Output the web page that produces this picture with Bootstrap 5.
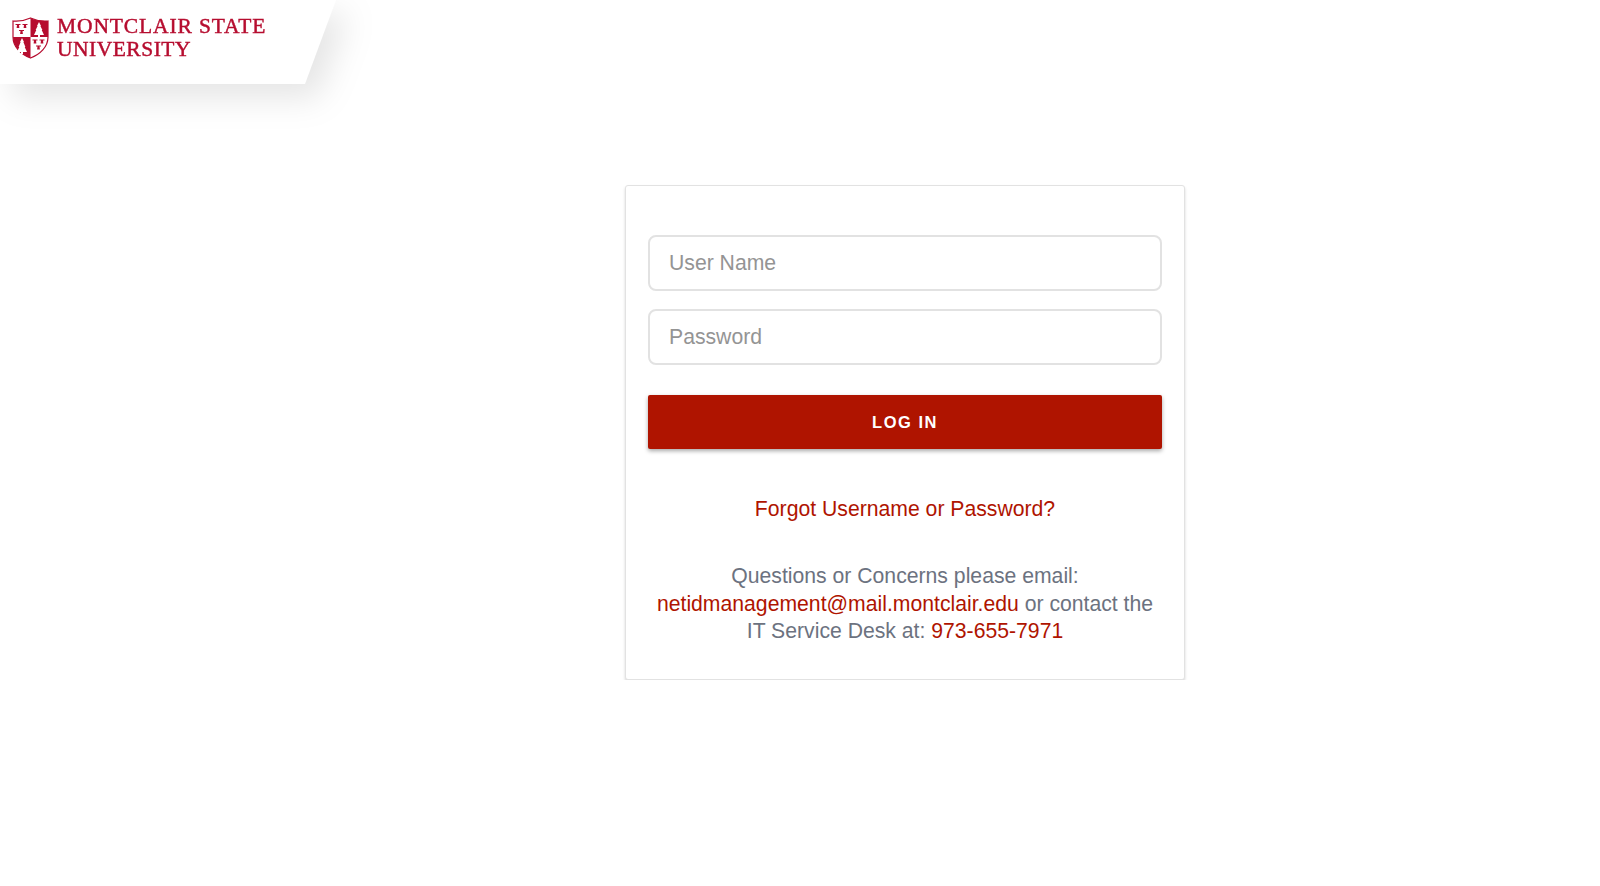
<!DOCTYPE html>
<html lang="en">

<head>
  <meta charset="UTF-8" />
  <meta name="viewport" content="width=device-width, initial-scale=1.0" />
  <title>Login - Montclair State University</title>
  <link href="https://cdn.jsdelivr.net/npm/bootstrap@5.3.3/dist/css/bootstrap.min.css" rel="stylesheet" />
  <style>
    body {
      background-color: #fff;
      font-family: "Liberation Sans", Arial, sans-serif;
    }

    .logo-wrap {
      width: 400px;
      height: 84px;
      filter: drop-shadow(12px 14px 16px rgba(0, 0, 0, 0.1));
    }

    .logo-plate {
      height: 84px;
      width: 336px;
      padding: 17px 0 0 12px;
      background-color: #fff;
      clip-path: polygon(0 0, 100% 0, 305px 100%, 0 100%);
    }

    .logo-text {
      color: #b60d2f;
      font-family: "Liberation Serif", serif;
      font-size: 21.5px;
      line-height: 23px;
      letter-spacing: 0.88px;
      margin-top: -2px;
      -webkit-text-stroke: 0.45px #b60d2f;
    }

    .logo-text span {
      letter-spacing: 0.5px;
    }

    .login-spacer {
      width: 210px;
    }

    .login-box {
      width: 560px;
      margin-top: 101px;
      padding: 49px 22px 34px;
      border: 1px solid #e2e2e2;
      border-radius: 3px;
      box-shadow: 0 2px 3px rgba(0, 0, 0, 0.16);
    }

    .login-input {
      height: 56px;
      padding: 0 19px;
      margin-bottom: 18px;
      border: 2px solid #e2e2e2;
      border-radius: 8px;
      font-size: 21.2px;
    }

    .login-input::placeholder {
      color: #949494;
    }

    .login-btn {
      height: 54px;
      margin-top: 12px;
      background-color: #af1400;
      border: none;
      border-radius: 2px;
      box-shadow: 0 2px 4px rgba(0, 0, 0, 0.35);
      color: #fff;
      font-size: 16.5px;
      font-weight: 700;
      letter-spacing: 1.5px;
    }

    .login-btn:hover {
      background-color: #951100;
      color: #fff;
    }

    .forgot-row {
      margin-top: 46px;
      margin-bottom: 39px;
      font-size: 21.2px;
      line-height: 28px;
    }

    .help-text {
      color: #6c7280;
      font-size: 21.2px;
      line-height: 27.6px;
    }

    .red-link {
      color: #af1400;
      text-decoration: none;
    }
  </style>
</head>

<body>
  <div class="logo-wrap">
    <div class="logo-plate d-flex gap-2">
      <svg width="37" height="42" viewBox="0 0 37 42" aria-label="Shield">
        <path d="M18.5 1 C13 3.5 6 4.5 1 4 V20 C1 30 9 37.5 18.5 41 C28 37.5 36 30 36 20 V4 C31 4.5 24 3.5 18.5 1 Z" fill="#fff" stroke="#b60d2f" stroke-width="1.2" />
        <path d="M18.5 1 C22 3 27 4 36 4 V20 H18.5 Z" fill="#b60d2f" />
        <path d="M1 20 H18.5 V41 C9 37.5 1 30 1 20 Z" fill="#b60d2f" />
        <path d="M27 5 L29 9 L28.4 9 L30.4 13 L29.7 13 L32 18 H28 V20 H26 V18 H22 L24.3 13 L23.6 13 L25.6 9 L25 9 Z" fill="#fff" />
        <path d="M10 21 L12 25 L11.4 25 L13.4 30 L12.7 30 L15 35 H11 V37 H9 V35 H5 L7.3 30 L6.6 30 L8.6 25 L8 25 Z" fill="#fff" />
        <g fill="#b60d2f">
          <path d="M3.5 7 H8.5 V8 H7 L7.4 11 H4.6 L5 8 H3.5 Z" />
          <path d="M10.5 7 H15.5 V8 H14 L14.4 11 H11.6 L12 8 H10.5 Z" />
          <path d="M7 13 H12 V14 H10.5 L10.9 17 H8.1 L8.5 14 H7 Z" />
          <path d="M20.5 22.5 H25.5 V23.5 H24 L24.4 26.5 H21.6 L22 23.5 H20.5 Z" />
          <path d="M27.5 22.5 H32.5 V23.5 H31 L31.4 26.5 H28.6 L29 23.5 H27.5 Z" />
          <path d="M24 28.5 H29 V29.5 H27.5 L27.9 32.5 H25.1 L25.5 29.5 H24 Z" />
        </g>
      </svg>
      <div class="logo-text">MONTCLAIR STATE<br /><span>UNIVERSITY</span></div>
    </div>
  </div>

  <main class="d-flex">
    <div class="login-spacer"></div>
    <div class="flex-grow-1 d-flex justify-content-center">
      <div class="login-box bg-white">
        <form>
          <input type="text" class="form-control login-input" placeholder="User Name" />
          <input type="password" class="form-control login-input" placeholder="Password" />
          <button type="button" class="btn login-btn w-100">LOG IN</button>
        </form>
        <div class="forgot-row text-center">
          <a href="#" class="red-link">Forgot Username or Password?</a>
        </div>
        <p class="help-text text-center mb-0">
          Questions or Concerns please email:<br />
          <a href="#" class="red-link">netidmanagement@mail.montclair.edu</a> or contact the<br />
          IT Service Desk at: <a href="#" class="red-link">973-655-7971</a>
        </p>
      </div>
    </div>
  </main>
</body>
</html>
